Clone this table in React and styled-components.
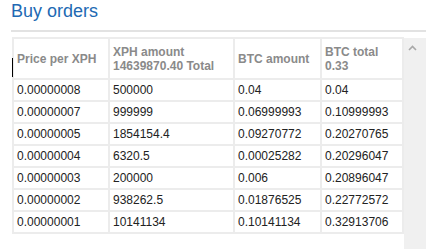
import React from "react";
import styled, { createGlobalStyle } from "styled-components";

const Global = createGlobalStyle`
  html, body { margin: 0; padding: 0; background: #fff; }
  body { font-family: "Liberation Sans", Arial, sans-serif; }
`;

const Page = styled.div`
  height: 100vh;
  display: flex;
  flex-direction: column;
  padding-left: 11px;
  box-sizing: border-box;
  overflow: hidden;
`;

const Title = styled.h2`
  margin: 0;
  font-size: 18px;
  line-height: 22px;
  font-weight: normal;
  color: #2169b3;
`;

const Divider = styled.div`
  margin-top: 8px;
  height: 2px;
  background: #e2e2e2;
`;

const ScrollRow = styled.div`
  position: relative;
  margin-top: 5px;
  flex: 1;
  display: flex;
  align-items: stretch;
  padding-left: 1px;
`;

const Grid = styled.div`
  display: grid;
  grid-template-columns: 96px 125px 87px 82px;
  grid-auto-rows: auto;
  align-self: flex-start;
  border-left: 2px solid #ececec;
  border-top: 2px solid #ececec;
`;

const Cell = styled.div`
  box-sizing: border-box;
  border-right: 2px solid #ececec;
  border-bottom: 2px solid #ececec;
  padding: 0 3px;
  display: flex;
  flex-direction: column;
  justify-content: center;
  font-size: 12px;
  line-height: 14px;
  color: ${(p) => (p.$head ? "#8a8a8a" : "#222")};
  font-weight: ${(p) => (p.$head ? "bold" : "normal")};
  height: ${(p) => (p.$head ? "41px" : "22px")};
  white-space: nowrap;
`;

const Scrollbar = styled.div`
  width: 22px;
  margin-top: 1px;
  background: #f0f0f0;
  display: flex;
  flex-direction: column;
  padding-top: 7px;
  padding-left: 4px;
  box-sizing: border-box;
`;

const Caret = styled.div`
  position: absolute;
  left: 1px;
  top: 21px;
  width: 1px;
  height: 19px;
  background: #000;
`;

const header = [
  ["Price per XPH"],
  ["XPH amount", "14639870.40 Total"],
  ["BTC amount"],
  ["BTC total", "0.33"],
];

const rows = [
  ["0.00000008", "500000", "0.04", "0.04"],
  ["0.00000007", "999999", "0.06999993", "0.10999993"],
  ["0.00000005", "1854154.4", "0.09270772", "0.20270765"],
  ["0.00000004", "6320.5", "0.00025282", "0.20296047"],
  ["0.00000003", "200000", "0.006", "0.20896047"],
  ["0.00000002", "938262.5", "0.01876525", "0.22772572"],
  ["0.00000001", "10141134", "0.10141134", "0.32913706"],
];

export default function App() {
  return (
    <>
      <Global />
      <Page>
        <Title>Buy orders</Title>
        <Divider />
        <ScrollRow>
          <Grid>
            {header.map((lines, i) => (
              <Cell $head key={"h" + i}>
                {lines.map((l, j) => (
                  <span key={j}>{l}</span>
                ))}
              </Cell>
            ))}
            {rows.map((r, i) =>
              r.map((v, j) => <Cell key={i + "-" + j}>{v}</Cell>)
            )}
          </Grid>
          <Scrollbar>
            <svg width="9" height="6" viewBox="0 0 9 6">
              <path d="M1 5 L4.5 1.5 L8 5" fill="none" stroke="#a8a8a8" strokeWidth="1.6" />
            </svg>
          </Scrollbar>
          <Caret />
        </ScrollRow>
      </Page>
    </>
  );
}
